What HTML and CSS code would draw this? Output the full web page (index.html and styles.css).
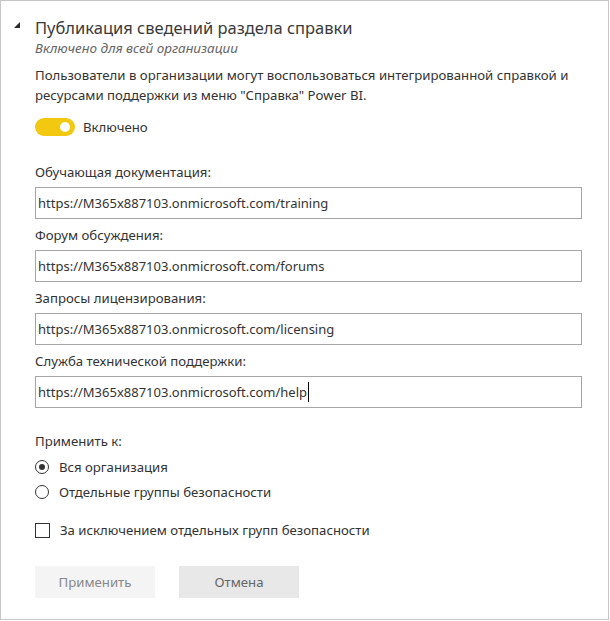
FILE: index.html
```html
<!DOCTYPE html>
<html lang="ru">
<head>
<meta charset="utf-8">
<link rel="stylesheet" href="styles.css">
</head>
<body>
<div class="panel">
  <div class="header">
    <span class="caret-tri"></span>
    <div class="title">Публикация сведений раздела справки</div>
  </div>
  <div class="subtitle">Включено для всей организации</div>
  <p class="desc">Пользователи в организации могут воспользоваться интегрированной справкой и ресурсами поддержки из меню "Справка" Power BI.</p>
  <div class="toggle-row">
    <span class="toggle"><span class="knob"></span></span>
    <span class="toggle-label">Включено</span>
  </div>
  <div class="fields">
    <div class="field">
      <div class="label">Обучающая документация:</div>
      <div class="input">https://M365x887103.onmicrosoft.com/training</div>
    </div>
    <div class="field">
      <div class="label">Форум обсуждения:</div>
      <div class="input">https://M365x887103.onmicrosoft.com/forums</div>
    </div>
    <div class="field">
      <div class="label">Запросы лицензирования:</div>
      <div class="input">https://M365x887103.onmicrosoft.com/licensing</div>
    </div>
    <div class="field">
      <div class="label">Служба технической поддержки:</div>
      <div class="input">https://M365x887103.onmicrosoft.com/help<span class="cursor"></span></div>
    </div>
  </div>
  <div class="apply-label">Применить к:</div>
  <div class="option"><span class="radio checked"></span><span>Вся организация</span></div>
  <div class="option second"><span class="radio"></span><span>Отдельные группы безопасности</span></div>
  <div class="option check-row"><span class="checkbox"></span><span>За исключением отдельных групп безопасности</span></div>
  <div class="buttons">
    <span class="btn btn-apply">Применить</span>
    <span class="btn btn-cancel">Отмена</span>
  </div>
</div>
</body>
</html>
```

FILE: styles.css
```css
* { box-sizing: border-box; }
html, body { margin: 0; padding: 0; background: #fff; }
body {
  font-family: "Noto Sans", "Open Sans", sans-serif;
  font-size: 13.2px;
  color: #333;
}
.panel {
  width: 609px;
  height: 620px;
  border: 1px solid #c6c6c6;
  padding: 17px 27px 0 34px;
  position: relative;
}
.header { display: flex; align-items: center; height: 20px; }
.caret-tri {
  position: absolute;
  left: 13px;
  top: 21px;
  width: 0; height: 0;
  border-left: 6px solid transparent;
  border-bottom: 6px solid #2b2b2b;
}
.title { font-size: 16.5px; line-height: 20px; color: #3a3a3a; }
.subtitle {
  font-style: italic;
  font-size: 13.5px;
  color: #666;
  line-height: 19px;
  margin-top: 1px;
}
.desc {
  margin: 7px 0 0;
  line-height: 20px;
}
.toggle-row {
  display: flex;
  align-items: center;
  gap: 8px;
  height: 20px;
  margin-top: 12px;
}
.toggle {
  width: 40px;
  height: 18px;
  border-radius: 9px;
  background: #f2c811;
  display: flex;
  align-items: center;
  justify-content: flex-end;
  padding-right: 5px;
}
.knob { width: 10px; height: 10px; border-radius: 50%; background: #fff; }
.fields { margin-top: 26px; display: flex; flex-direction: column; gap: 7px; }
.field { display: flex; flex-direction: column; gap: 6px; }
.label { line-height: 18px; }
.input {
  height: 32px;
  border: 1px solid #a6a6a6;
  padding: 0 2px;
  display: flex;
  align-items: center;
  color: #333;
  width: 547px;
  font-size: 13px;
}
.cursor {
  display: inline-block;
  width: 1px;
  height: 20px;
  background: #000;
  margin-left: 1px;
}
.apply-label { margin-top: 24px; line-height: 18px; }
.option { display: flex; align-items: center; gap: 10px; height: 20px; margin-top: 7px; }
.option.second { margin-top: 5px; }
.option.check-row { margin-top: 18px; }
.radio {
  width: 14px; height: 14px;
  border: 1px solid #333;
  border-radius: 50%;
  display: flex; align-items: center; justify-content: center;
  flex: none;
}
.radio.checked::after {
  content: "";
  width: 6px; height: 6px; border-radius: 50%; background: #333;
}
.checkbox { width: 15px; height: 15px; border: 1px solid #333; flex: none; }
.buttons { display: flex; gap: 24px; margin-top: 26px; }
.btn {
  width: 120px; height: 32px;
  display: flex; align-items: center; justify-content: center;
}
.btn-apply { background: #f4f4f4; color: #888; }
.btn-cancel { background: #e8e8e8; color: #666; }
```
